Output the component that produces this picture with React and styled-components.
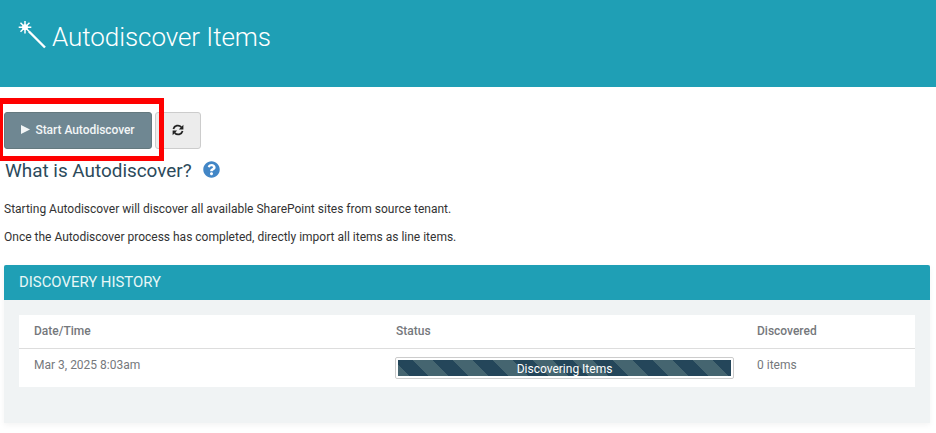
import React from "react";
import styled, { createGlobalStyle } from "styled-components";
import { FaQuestionCircle } from "react-icons/fa";

const Global = createGlobalStyle`
  html, body { margin: 0; padding: 0; background: #fff; }
  body { font-family: Roboto, "Liberation Sans", sans-serif; font-size: 12px; color: #333; }
  * { box-sizing: border-box; }
`;

const Page = styled.div`
  position: relative;
  width: 936px;
  height: 433px;
  overflow: hidden;
`;

const Banner = styled.header`
  height: 87px;
  background: #1f9fb5;
  display: flex;
  align-items: flex-start;
  padding: 20px 0 0 18px;
  color: #fff;
`;

const Title = styled.h1`
  margin: 0 0 0 4px;
  font-weight: 300;
  font-size: 26px;
  line-height: 35px;
  letter-spacing: -0.07px;
`;

const Wand = styled.svg`
  width: 30px;
  height: 30px;
  display: block;
`;

const Content = styled.main`
  padding: 25px 6px 0 4px;
`;

const Toolbar = styled.div`
  display: flex;
  gap: 3px;
  height: 37px;
`;

const PrimaryButton = styled.button`
  width: 148px;
  height: 37px;
  padding: 0 1px 1px 1px;
  display: flex;
  align-items: center;
  justify-content: center;
  gap: 5px;
  background: #6f8792;
  border: 1px solid #64797f;
  border-radius: 3px;
  color: #f2f5f6;
  font: 500 12px Roboto, sans-serif;
  letter-spacing: -0.05px;
`;

const IconButton = styled.button`
  width: 46px;
  height: 37px;
  padding: 0 0 2px;
  display: flex;
  align-items: center;
  justify-content: center;
  background: #ececec;
  border: 1px solid #ccc;
  border-radius: 3px;
`;

const Highlight = styled.div`
  position: absolute;
  left: 0;
  top: 98px;
  width: 164px;
  height: 63px;
  border: 5px solid #fe0000;
  border-left-width: 3px;
  border-top-width: 6px;
  pointer-events: none;
`;

const Heading = styled.h2`
  margin: 9px 0 0 1px;
  height: 26px;
  display: flex;
  align-items: center;
  gap: 11px;
  font-weight: 400;
  font-size: 18.9px;
  line-height: 26px;
  color: #2c4a5b;
`;

const HelpIcon = styled(FaQuestionCircle)`
  width: 17px;
  height: 17px;
  color: #4286c6;
  margin-top: -3px;
`;

const Paragraph = styled.p`
  margin: ${(p) => p.$top}px 0 0;
  font-size: 12px;
  line-height: 16px;
  color: #333;
`;

const Panel = styled.section`
  margin-top: 20px;
  height: 158px;
  background: #f0f3f4;
  box-shadow: 0 2px 6px rgba(0, 0, 0, 0.05);
`;

const PanelHeader = styled.div`
  height: 35px;
  background: #1f9fb5;
  border-radius: 2px 2px 0 0;
  padding-left: 15px;
  color: #e8f7f7;
  font-size: 14.9px;
  line-height: 35px;
`;

const Table = styled.div`
  margin: 15px 15px 0;
  background: #fff;
`;

const Row = styled.div`
  display: grid;
  grid-template-columns: 362px 361px 1fr;
  height: ${(p) => p.$h}px;
  padding-left: 15px;
  align-items: ${(p) => (p.$head ? "center" : "start")};
  border-bottom: ${(p) => (p.$head ? "1px solid #ddd" : "none")};
`;

const HeadCell = styled.div`
  font-weight: 500;
  font-size: 12px;
  color: #75787c;
  margin-top: -1px;
`;

const Cell = styled.div`
  font-size: 12px;
  line-height: 16px;
  color: #75787c;
  padding-top: 8px;
`;

const ProgressCell = styled.div`
  margin-left: -1px;
  padding-top: 8px;
`;

const Progress = styled.div`
  width: 339px;
  height: 22px;
  padding: 2px;
  background: #fff;
  border: 1px solid #ccc;
  border-radius: 2px;
`;

const ProgressBar = styled.div`
  height: 16px;
  background-image: repeating-linear-gradient(
    45deg,
    #456570 0 7.78px,
    #24465a 7.78px 21.92px,
    #456570 21.92px 28.28px
  );
  color: #fff;
  font-size: 12px;
  line-height: 18px;
  text-align: center;
`;

export default function App() {
  return (
    <Page>
      <Global />
      <Banner>
        <Wand viewBox="0 0 30 30" aria-hidden="true">
          <path
            d="M7 1v12.6M.7 7.3h12.6M2.5 2.8l9 9M11.5 2.8l-9 9"
            stroke="#fff"
            strokeWidth="1.5"
            fill="none"
          />
          <circle cx="7" cy="7.3" r="3" fill="#fff" />
          <path d="M11 11.5L27 27.5" stroke="#fff" strokeWidth="2.4" fill="none" />
        </Wand>
        <Title>Autodiscover Items</Title>
      </Banner>
      <Content>
        <Toolbar>
          <PrimaryButton>
            <svg width="9" height="9" viewBox="0 0 9 9" aria-hidden="true" style={{ marginTop: -1 }}>
              <path d="M0 0L9 4.5L0 9Z" fill="#f2f5f6" />
            </svg>
            Start Autodiscover
          </PrimaryButton>
          <IconButton>
            <svg width="12" height="12" viewBox="0 0 12 12" aria-hidden="true">
              <path d="M1.4 5A4.6 4.6 0 0 1 9.3 3.1" stroke="#222" strokeWidth="1.7" fill="none" />
              <path d="M10.6 7A4.6 4.6 0 0 1 2.7 8.9" stroke="#222" strokeWidth="1.7" fill="none" />
              <path d="M11.4 0.8V5.4H6.8Z" fill="#222" />
              <path d="M0.6 11.2V6.6H5.2Z" fill="#222" />
            </svg>
          </IconButton>
        </Toolbar>
        <Heading>
          What is Autodiscover?
          <HelpIcon />
        </Heading>
        <Paragraph $top={17}>Starting Autodiscover will discover all available SharePoint sites from source tenant.</Paragraph>
        <Paragraph $top={12}>Once the Autodiscover process has completed, directly import all items as line items.</Paragraph>
        <Panel>
          <PanelHeader>DISCOVERY HISTORY</PanelHeader>
          <Table>
            <Row $head $h={34}>
              <HeadCell>Date/Time</HeadCell>
              <HeadCell>Status</HeadCell>
              <HeadCell>Discovered</HeadCell>
            </Row>
            <Row $h={38}>
              <Cell>Mar 3, 2025 8:03am</Cell>
              <ProgressCell>
                <Progress>
                  <ProgressBar>Discovering Items</ProgressBar>
                </Progress>
              </ProgressCell>
              <Cell>0 items</Cell>
            </Row>
          </Table>
        </Panel>
      </Content>
      <Highlight />
    </Page>
  );
}
